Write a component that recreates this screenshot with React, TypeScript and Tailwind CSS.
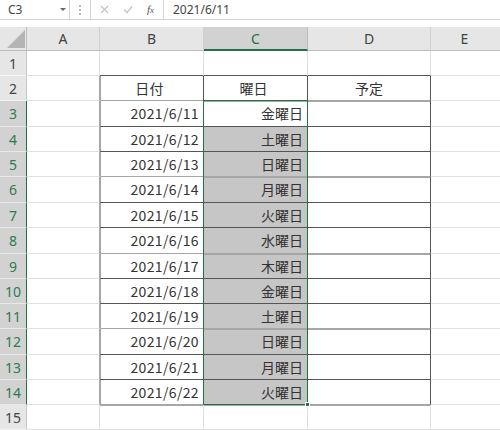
import React from "react";

const ROWS = [
  { n: 1, h: 25 },
  { n: 2, h: 25 },
  { n: 3, h: 26 },
  { n: 4, h: 25 },
  { n: 5, h: 25 },
  { n: 6, h: 26 },
  { n: 7, h: 25 },
  { n: 8, h: 26 },
  { n: 9, h: 25 },
  { n: 10, h: 25 },
  { n: 11, h: 25 },
  { n: 12, h: 26 },
  { n: 13, h: 25 },
  { n: 14, h: 25 },
  { n: 15, h: 25 },
];

const DATA: Record<number, [string, string]> = {
  3: ["2021/6/11", "金曜日"],
  4: ["2021/6/12", "土曜日"],
  5: ["2021/6/13", "日曜日"],
  6: ["2021/6/14", "月曜日"],
  7: ["2021/6/15", "火曜日"],
  8: ["2021/6/16", "水曜日"],
  9: ["2021/6/17", "木曜日"],
  10: ["2021/6/18", "金曜日"],
  11: ["2021/6/19", "土曜日"],
  12: ["2021/6/20", "日曜日"],
  13: ["2021/6/21", "月曜日"],
  14: ["2021/6/22", "火曜日"],
};

// rows whose bottom table rule is drawn as a soft 2px grey line
const SOFT_BOTTOM = new Set([2, 5, 8, 11, 14]);

const headFont = { fontFamily: '"Noto Sans", Roboto, sans-serif' };
const cellFont = { fontFamily: '"Noto Sans CJK JP", "Noto Sans", sans-serif' };

function FormulaBar() {
  return (
    <div className="flex h-[20px] border-b border-[#d4d4d4] bg-white text-[12px] text-[#444]" style={headFont}>
      <div className="relative flex w-[70px] items-center border-r border-[#d4d4d4] pl-[8px]">
        <span>C3</span>
        <span className="absolute left-[60px] top-[8px] h-0 w-0 border-x-[3px] border-t-[3px] border-x-transparent border-t-[#666]" />
      </div>
      <div className="flex w-[20px] flex-col items-center justify-center gap-[2px]">
        <span className="h-[2px] w-[2px] bg-[#b8b8b8]" />
        <span className="h-[2px] w-[2px] bg-[#b8b8b8]" />
        <span className="h-[2px] w-[2px] bg-[#b8b8b8]" />
      </div>
      <div className="flex w-[74px] items-center border-x border-[#d4d4d4]">
        <svg className="ml-[9px]" width="9" height="9" viewBox="0 0 9 9">
          <path d="M1 1 L8 8 M8 1 L1 8" stroke="#c2c2c2" strokeWidth="1.1" fill="none" />
        </svg>
        <svg className="ml-[14px]" width="10" height="9" viewBox="0 0 10 9">
          <path d="M1 4.5 L4 7.5 L9 1.5" stroke="#c2c2c2" strokeWidth="1.2" fill="none" />
        </svg>
        <span
          className="ml-[14px] text-[11px] italic text-[#555]"
          style={{ fontFamily: '"Liberation Serif", serif' }}
        >
          f<span className="text-[9px]">x</span>
        </span>
      </div>
      <div className="flex flex-1 items-center pl-[9px]">2021/6/11</div>
    </div>
  );
}

function ColumnHeaders() {
  const cols = [
    { l: "A", w: "w-[73px]", sel: false },
    { l: "B", w: "w-[104px]", sel: false },
    { l: "C", w: "w-[104px]", sel: true },
    { l: "D", w: "w-[123px]", sel: false },
  ];
  return (
    <div className="flex h-[24px] text-[14px]" style={headFont}>
      <div className="relative w-[27px] border-b border-r border-[#bdbdbd] bg-[#e6e6e6]">
        <svg className="absolute left-[7px] top-[3px]" width="18" height="18" viewBox="0 0 18 18">
          <path d="M18 0 L18 18 L0 18 Z" fill="#b4b4b4" />
        </svg>
      </div>
      {cols.map((c) =>
        c.sel ? (
          <div
            key={c.l}
            className={`${c.w} flex items-center justify-center border-b-2 border-r border-b-[#217346] border-r-[#bdbdbd] bg-[#d2d2d2] text-[#217346]`}
          >
            {c.l}
          </div>
        ) : (
          <div
            key={c.l}
            className={`${c.w} flex items-center justify-center border-b border-r border-b-[#bdbdbd] border-r-[#d0d0d0] bg-[#e6e6e6] text-[#444]`}
          >
            {c.l}
          </div>
        )
      )}
      <div className="flex flex-1 items-center justify-center border-b border-[#bdbdbd] bg-[#e6e6e6] pr-[2px] text-[#444]">
        E
      </div>
    </div>
  );
}

function Row({ n, h }: { n: number; h: number }) {
  const selected = n >= 3 && n <= 14;
  const inTable = n >= 2 && n <= 14;
  const softTop = n === 3 || n === 6 || n === 9 || n === 12 || n === 15;
  const bottom = inTable
    ? SOFT_BOTTOM.has(n)
      ? "border-b-[#a6a6a6]"
      : "border-b-[#555]"
    : n === 1
    ? "border-b-[#555]"
    : "border-b-[#e1e1e1]";
  const topShadow = softTop ? "shadow-[inset_0_1px_0_#a6a6a6]" : "";
  const data = DATA[n];

  return (
    <div className="flex" style={{ height: h }}>
      <div
        className={
          selected
            ? "flex w-[27px] items-center justify-center border-b border-r border-b-[#e8e8e8] border-r-[#217346] bg-[#d2d2d2] text-[14px] text-[#2f7a50]"
            : "flex w-[27px] items-center justify-center border-b border-r border-b-[#f4f4f4] border-r-[#c8c8c8] bg-[#e6e6e6] text-[14px] text-[#444]"
        }
        style={headFont}
      >
        {n}
      </div>
      <div
        className={
          inTable
            ? "w-[73px] border-b border-r border-b-[#e1e1e1] border-r-[#a6a6a6]"
            : "w-[73px] border-b border-r border-[#e1e1e1]"
        }
      />
      <div
        className={`flex w-[104px] items-center justify-end border-b border-r pr-[4px] text-[14px] tracking-[0.35px] text-[#333] ${bottom} ${
          inTable ? "border-r-[#555] shadow-[inset_1px_0_0_#a6a6a6]" : "border-r-[#e1e1e1]"
        } ${topShadow}`}
        style={cellFont}
      >
        {n === 2 ? <span className="w-full text-center">日付</span> : data?.[0]}
      </div>
      <div
        className={`flex w-[104px] items-center justify-end border-b border-r pr-[4px] text-[14px] text-[#333] ${bottom} ${
          inTable ? "border-r-[#555]" : "border-r-[#e1e1e1]"
        } ${n >= 4 && n <= 14 ? "bg-[#c6c6c6]" : ""} ${topShadow}`}
        style={cellFont}
      >
        {n === 2 ? <span className="w-full text-center">曜日</span> : data?.[1]}
      </div>
      <div
        className={`flex w-[123px] items-center justify-center border-b border-r text-[14px] text-[#333] ${bottom} ${
          inTable ? "border-r-[#555]" : "border-r-[#e1e1e1]"
        } ${topShadow}`}
        style={cellFont}
      >
        {n === 2 ? "予定" : ""}
      </div>
      <div className="flex-1 border-b border-[#e1e1e1]" />
    </div>
  );
}

export default function App() {
  return (
    <div className="relative h-[430px] w-[500px] overflow-hidden bg-white">
      <FormulaBar />
      <div className="h-[7px] bg-white" />
      <ColumnHeaders />
      {ROWS.map((r) => (
        <Row key={r.n} n={r.n} h={r.h} />
      ))}
      {/* active range C3:C14 */}
      <div className="pointer-events-none absolute left-[203px] top-[100px] h-[305px] w-[105px] border border-[#217346]" />
      <div className="pointer-events-none absolute left-[305px] top-[402px] h-[5px] w-[5px] border border-white bg-[#217346]" />
    </div>
  );
}
